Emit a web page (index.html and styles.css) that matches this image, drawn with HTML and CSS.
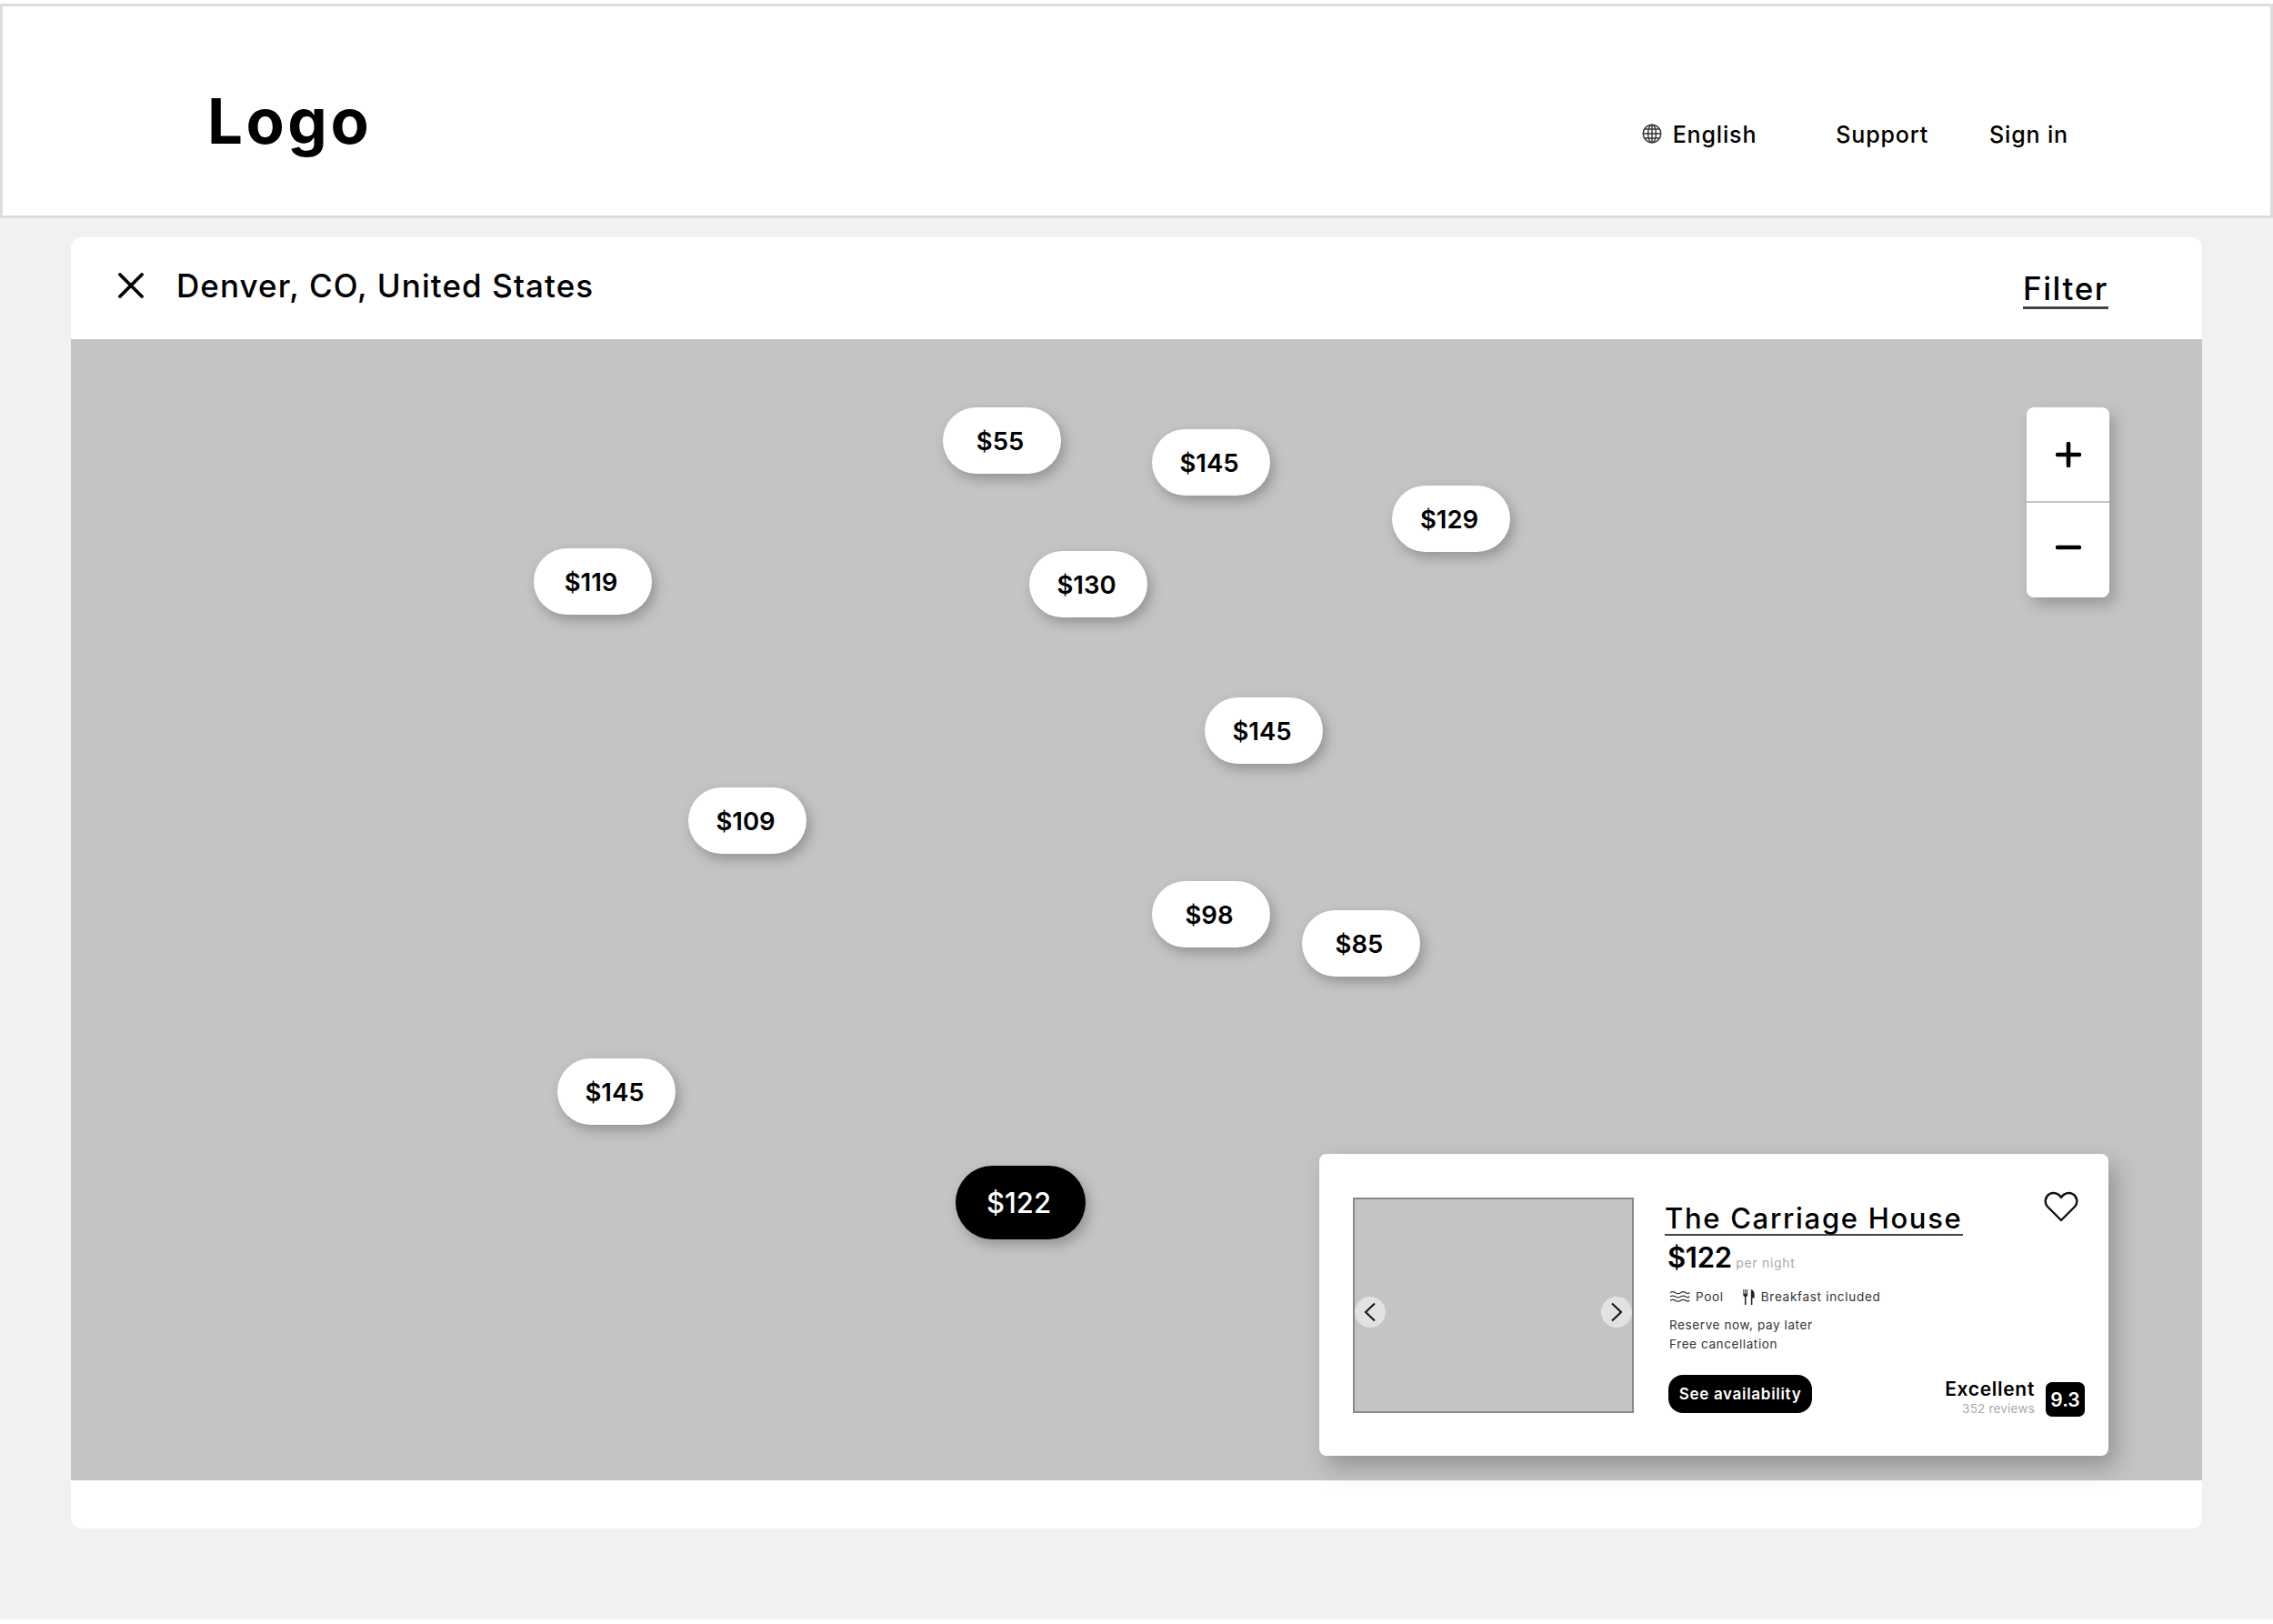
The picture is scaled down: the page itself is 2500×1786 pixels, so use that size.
FILE: index.html
```html
<!DOCTYPE html>
<html lang="en">
<head>
  <meta charset="utf-8">
  <title>Map search</title>
  <link rel="stylesheet" href="styles.css">
</head>
<body>
  <header class="site-header">
    <div class="logo">Logo</div>
    <nav class="site-nav">
      <a class="nav-link nav-lang">
        <svg class="globe" viewBox="0 0 22 22" fill="none" stroke="#333" stroke-width="1.4">
          <circle cx="11" cy="11" r="9.8"/>
          <ellipse cx="11" cy="11" rx="4.4" ry="9.8"/>
          <path d="M11 1.2V20.8M1.2 11H20.8M2.6 6H19.4M2.6 16H19.4"/>
        </svg>
        English
      </a>
      <a class="nav-link nav-support">Support</a>
      <a class="nav-link">Sign in</a>
    </nav>
  </header>

  <main class="page">
    <section class="panel">
      <div class="panel-top">
        <svg class="close" viewBox="0 0 28 28" fill="none" stroke="#000" stroke-width="3.8" stroke-linecap="round">
          <path d="M2 2L26 26M26 2L2 26"/>
        </svg>
        <h2 class="place">Denver, CO, United States</h2>
        <a class="filter">Filter</a>
      </div>

      <div class="map">
        <span class="pin pin-a">$55</span>
        <span class="pin pin-b">$145</span>
        <span class="pin pin-c">$129</span>
        <span class="pin pin-d">$119</span>
        <span class="pin pin-e">$130</span>
        <span class="pin pin-f">$145</span>
        <span class="pin pin-g">$109</span>
        <span class="pin pin-h">$98</span>
        <span class="pin pin-i">$85</span>
        <span class="pin pin-j">$145</span>
        <span class="pin pin-active">$122</span>

        <div class="zoom-box">
          <div class="zoom-btn">
            <svg viewBox="0 0 28 28" fill="none" stroke="#000" stroke-width="4.6" stroke-linecap="round"><path d="M14 2V26M2 14H26"/></svg>
          </div>
          <div class="zoom-btn">
            <svg viewBox="0 0 28 28" fill="none" stroke="#000" stroke-width="4.6" stroke-linecap="round"><path d="M2 14H26"/></svg>
          </div>
        </div>

        <article class="card">
          <div class="photo">
            <span class="arrow">
              <svg viewBox="0 0 14 22" fill="none" stroke="#111" stroke-width="2"><path d="M12 1.5L2 11L12 20.5"/></svg>
            </span>
            <span class="arrow">
              <svg viewBox="0 0 14 22" fill="none" stroke="#111" stroke-width="2"><path d="M2 1.5L12 11L2 20.5"/></svg>
            </span>
          </div>
          <div class="info">
            <div class="title-row">
              <a class="title">The Carriage House</a>
              <svg class="heart" viewBox="0 0 38 34" fill="none" stroke="#111" stroke-width="2.4" stroke-linejoin="round">
                <path d="M19 32L4 17C0 12.500 1.500 6 6 3.300C10.500 .8 16 2 19 7C22 2 27.500 .8 32 3.300C36.500 6 38 12.500 34 17Z"/>
              </svg>
            </div>
            <div class="price"><b>$122</b> <span>per night</span></div>
            <ul class="amenities">
              <li>
                <svg class="amenity-icon" viewBox="0 0 24 14" fill="none" stroke="#333" stroke-width="1.3">
                  <path d="M1 2.500Q4 .5 7 2.500T13 2.500T19 2.500T23 2M1 7Q4 5 7 7T13 7T19 7T23 6.500M1 11.500Q4 9.500 7 11.500T13 11.500T19 11.500T23 11"/>
                </svg>
                Pool
              </li>
              <li>
                <svg class="amenity-icon amenity-food" viewBox="0 0 15 18" fill="#222">
                  <path d="M1 0H2V5H3V0H4V5H5V0H6V6.500Q6 8 4.300 8.500V18H2.700V8.500Q1 8 1 6.500Z"/>
                  <path d="M10 18V0Q14 1 14 6V10H11.600V18Z"/>
                </svg>
                Breakfast included
              </li>
            </ul>
            <p class="terms">Reserve now, pay later<br>Free cancellation</p>
            <div class="card-foot">
              <button class="avail-btn">See availability</button>
              <div class="rating">
                <div class="rating-text">
                  <strong>Excellent</strong>
                  <small>352 reviews</small>
                </div>
                <span class="score">9.3</span>
              </div>
            </div>
          </div>
        </article>
      </div>
    </section>
  </main>
</body>
</html>
```

FILE: styles.css
```css
*, *::before, *::after {
  box-sizing: border-box;
}
body {
  margin: 0;
  background: #fff;
  color: #000;
  font-family: Inter, "Liberation Sans", sans-serif;
}

/* Header */
.site-header {
  display: flex;
  height: 236px;
  margin-top: 4px;
  padding-left: 225px;
  border: 3px solid #dcdcdc;
  background: #fff;
}
.logo {
  margin-top: 85px;
  font-size: 69px;
  font-weight: 700;
  letter-spacing: 3.5px;
  line-height: 82px;
}
.site-nav {
  display: flex;
  align-items: flex-start;
  margin-left: auto;
  margin-right: 222px;
  padding-top: 126px;
}
.nav-link {
  margin-left: 67px;
  font-size: 25px;
  font-weight: 500;
  letter-spacing: 0.85px;
  line-height: 30px;
}
.nav-lang {
  display: flex;
  align-items: center;
  margin-right: 20px;
}
.globe {
  width: 22px;
  height: 22px;
  margin: -3px 12px 0 0;
}

/* Main panel */
.page {
  min-height: 1541px;
  padding: 21px 78px 0;
  background: #f1f1f1;
}
.panel {
  height: 1420px;
  border-radius: 12px;
  background: #fff;
  overflow: hidden;
}
.panel-top {
  display: flex;
  align-items: center;
  height: 112px;
  padding: 0 103px 0 52px;
}
.close {
  width: 28px;
  height: 28px;
  margin-top: -6px;
}
.place {
  margin: -6px 0 0 36px;
  font-size: 35px;
  font-weight: 500;
  letter-spacing: 1.08px;
}
.filter {
  margin: 2px 0 0 auto;
  border-bottom: 3px solid #444;
  font-size: 35px;
  font-weight: 500;
  letter-spacing: 1.6px;
  line-height: 40px;
}

/* Map */
.map {
  position: relative;
  height: 1255px;
  background: #c4c4c4;
}
.pin {
  position: absolute;
  display: flex;
  justify-content: center;
  align-items: center;
  width: 130px;
  height: 73px;
  padding-right: 4px;
  border-radius: 37px;
  background: #fff;
  box-shadow: 4px 6px 14px rgba(0, 0, 0, 0.25);
  font-size: 27.5px;
  font-weight: 600;
}
.pin-a { left: 959px; top: 75px; }
.pin-b { left: 1189px; top: 99px; }
.pin-c { left: 1453px; top: 161px; }
.pin-d { left: 509px; top: 230px; }
.pin-e { left: 1054px; top: 233px; }
.pin-f { left: 1247px; top: 394px; }
.pin-g { left: 679px; top: 493px; }
.pin-h { left: 1189px; top: 596px; }
.pin-i { left: 1354px; top: 628px; }
.pin-j { left: 535px; top: 791px; }
.pin-active {
  left: 973px;
  top: 909px;
  width: 143px;
  height: 81px;
  border-radius: 41px;
  background: #000;
  color: #fff;
  font-size: 31px;
  font-weight: 500;
}

/* Zoom buttons */
.zoom-box {
  position: absolute;
  top: 75px;
  right: 102px;
  width: 91px;
  border-radius: 8px;
  background: #fff;
  box-shadow: 6px 8px 16px rgba(0, 0, 0, 0.22);
}
.zoom-btn {
  display: flex;
  justify-content: center;
  align-items: center;
  height: 103px;
}
.zoom-btn + .zoom-btn {
  height: 106px;
  padding-bottom: 6px;
  border-top: 2px solid #c4c4c4;
}
.zoom-btn svg {
  width: 28px;
  height: 28px;
}

/* Hotel card */
.card {
  position: absolute;
  top: 896px;
  right: 103px;
  display: flex;
  align-items: flex-start;
  width: 868px;
  height: 332px;
  padding: 41px 26px 47px 37px;
  border-radius: 8px;
  background: #fff;
  box-shadow: 8px 12px 26px rgba(0, 0, 0, 0.25);
}
.photo {
  display: flex;
  justify-content: space-between;
  align-items: center;
  flex: none;
  width: 309px;
  height: 237px;
  margin-top: 7px;
  padding-top: 15px;
  border: 2px solid #8a8a8a;
  background: #c4c4c4;
}
.arrow {
  display: flex;
  justify-content: center;
  align-items: center;
  width: 34px;
  height: 34px;
  border-radius: 50%;
  background: #e2e2e2;
}
.arrow svg {
  width: 14px;
  height: 22px;
}
.info {
  display: flex;
  flex-direction: column;
  flex: 1;
  align-self: stretch;
  margin-left: 34px;
}
.title-row {
  display: flex;
  justify-content: space-between;
  height: 46px;
}
.title {
  align-self: flex-end;
  margin-bottom: -3px;
  border-bottom: 2px solid #444;
  font-size: 31px;
  font-weight: 500;
  letter-spacing: 1.7px;
  line-height: 35px;
}
.heart {
  width: 38px;
  height: 34px;
  margin-right: 7px;
}
.price {
  margin: 8px 0 0 3px;
  line-height: 38px;
}
.price b {
  font-size: 31px;
  font-weight: 600;
  letter-spacing: -0.3px;
}
.price span {
  color: #aaa;
  font-size: 14px;
  letter-spacing: 0.7px;
}
.amenities {
  display: flex;
  gap: 20px;
  margin: 9px 0 0 5px;
  padding: 0;
  list-style: none;
}
.amenities li {
  display: flex;
  align-items: center;
  color: #333;
  font-size: 13.5px;
  letter-spacing: 0.7px;
  line-height: 18px;
}
.amenity-icon {
  width: 23px;
  height: 14px;
  margin-right: 6px;
}
.amenity-icon.amenity-food {
  width: 15px;
  height: 17px;
}
.terms {
  margin: 12px 0 0 5px;
  color: #333;
  font-size: 13.5px;
  letter-spacing: 0.6px;
  line-height: 20.5px;
}
.card-foot {
  display: flex;
  justify-content: space-between;
  align-items: flex-end;
  margin: auto 0 0 4px;
}
.avail-btn {
  width: 158px;
  height: 42px;
  padding: 0;
  border: 0;
  border-radius: 16px;
  background: #000;
  color: #fff;
  font-family: inherit;
  font-size: 17px;
  font-weight: 600;
  letter-spacing: 0.7px;
}
.rating {
  display: flex;
  align-items: flex-end;
  margin-bottom: -4px;
}
.rating-text {
  display: flex;
  flex-direction: column;
  align-items: flex-end;
  margin: 0 12px 2px 0;
}
.rating-text strong {
  font-size: 21px;
  font-weight: 600;
  letter-spacing: 0.7px;
  line-height: 22px;
}
.rating-text small {
  margin-top: 3px;
  color: #aaa;
  font-size: 13.5px;
  letter-spacing: 0.2px;
  line-height: 14px;
}
.score {
  display: flex;
  justify-content: center;
  align-items: center;
  width: 43px;
  height: 38px;
  border-radius: 7px;
  background: #000;
  color: #fff;
  font-size: 21px;
  font-weight: 600;
}
```
